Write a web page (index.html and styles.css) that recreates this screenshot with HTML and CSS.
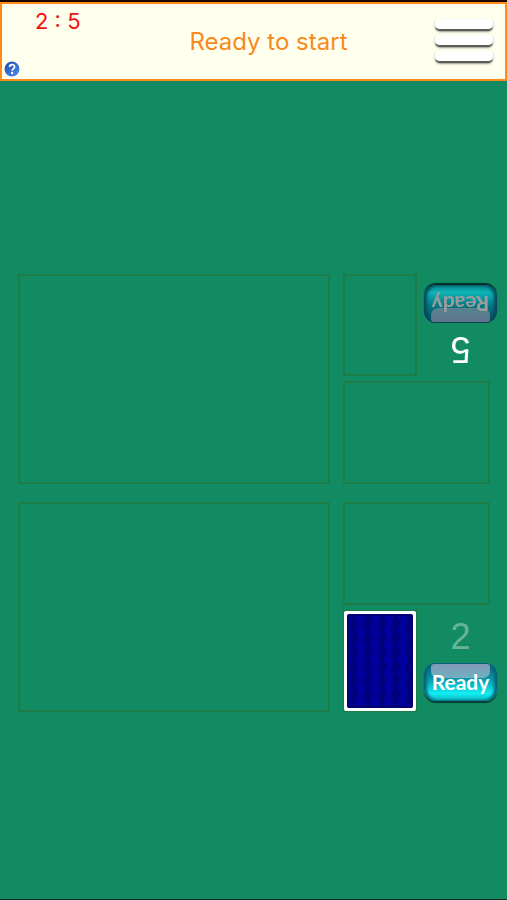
FILE: index.html
```
<!DOCTYPE html>
<html lang="en">
<head>
    <meta charset="UTF-8">
    <meta name="viewport" content="width=device-width, initial-scale=1.0">
    <title>Card Game</title>
    <link rel="stylesheet" href="styles.css">
</head>
<body>
    <header class="top-bar">
        <div class="score-box">
            <span class="score">2 : 5</span>
            <button type="button" class="help-button" aria-label="Help">
                <svg width="16" height="16" viewBox="0 0 16 16">
                    <defs>
                        <linearGradient id="helpFill" x1="0" y1="0" x2="1" y2="1">
                            <stop offset="0" stop-color="#1848ac"/>
                            <stop offset="1" stop-color="#5092ee"/>
                        </linearGradient>
                    </defs>
                    <circle cx="8" cy="8" r="7.5" fill="url(#helpFill)"/>
                    <path d="M5.6 6 C5.6 2.8 10.6 2.8 10.6 5.8 C10.6 7.6 8.2 7.6 8.2 9.8" fill="none" stroke="#fff" stroke-width="1.8"/>
                    <circle cx="8.1" cy="12" r="1.2" fill="#fff"/>
                </svg>
            </button>
        </div>
        <h1 class="status">Ready to start</h1>
        <button type="button" class="menu-button" aria-label="Menu">
            <span class="menu-bar"></span>
            <span class="menu-bar"></span>
            <span class="menu-bar"></span>
        </button>
    </header>

    <main class="table">
        <!-- Opponent -->
        <section class="player">
            <div class="slot meld"></div>
            <div class="side">
                <div class="side-row">
                    <div class="slot pile"></div>
                    <div class="controls flipped">
                        <span class="count">5</span>
                        <button type="button" class="ready-button" disabled>Ready</button>
                    </div>
                </div>
                <div class="slot discard"></div>
            </div>
        </section>

        <!-- Player -->
        <section class="player">
            <div class="slot meld"></div>
            <div class="side">
                <div class="slot discard"></div>
                <div class="side-row">
                    <div class="slot pile has-card">
                        <svg class="card" viewBox="0 0 66 93" preserveAspectRatio="none">
                            <defs>
                                <pattern id="cardBack" width="14" height="14" patternUnits="userSpaceOnUse">
                                    <rect width="14" height="14" fill="#00009c"/>
                                    <path d="M2 0 L6 4 L3 8 L2 14 H8 L11 9 L7 4 L8 0 Z" fill="#000080"/>
                                    <path d="M8 0 L7 4 L11 9 L8 14" fill="none" stroke="#000068" stroke-width="1"/>
                                </pattern>
                            </defs>
                            <rect width="66" height="93" rx="2" fill="url(#cardBack)"/>
                            <rect x="1" y="1" width="64" height="91" rx="2" fill="none" stroke="#000070" stroke-width="2"/>
                        </svg>
                    </div>
                    <div class="controls">
                        <span class="count waiting">2</span>
                        <button type="button" class="ready-button">Ready</button>
                    </div>
                </div>
            </div>
        </section>
    </main>
</body>
</html>
```

FILE: styles.css
```
* {
    box-sizing: border-box;
}
body {
    margin: 0;
    min-height: 100vh;
    display: flex;
    flex-direction: column;
    font-family: Inter, "Liberation Sans", sans-serif;
    background-color: #128b63;
    border-top: 2px solid #1a0800;
    border-bottom: 1px solid #06301f;
}
button {
    border: none;
    padding: 0;
    background: none;
    cursor: pointer;
}
.top-bar {
    display: grid;
    grid-template-columns: 100px 1fr 60px;
    height: 79px;
    padding-right: 10px;
    background-color: #ffffee;
    border: 2px solid #ff8c1a;
}
.score-box {
    display: flex;
    flex-direction: column;
    justify-content: space-between;
    padding: 3px 0 2px 2px;
}
.score {
    padding-left: 31px;
    font-size: 22px;
    line-height: 28px;
    color: #f01010;
    white-space: nowrap;
}
.help-button {
    width: 16px;
    height: 16px;
}
.help-button svg {
    display: block;
}
.status {
    margin: 0;
    align-self: center;
    text-align: center;
    font-size: 24px;
    font-weight: 400;
    line-height: 32px;
    color: #f78a1c;
}
.menu-button {
    display: flex;
    flex-direction: column;
    gap: 4px;
    padding-top: 15px;
}
.menu-bar {
    width: 58px;
    height: 12px;
    border-bottom: 2px solid #5c5c58;
    border-radius: 3px 3px 5px 5px;
    background-color: #ffffff;
    box-shadow: 0 1px 2px #99998e;
}
.table {
    flex: 1;
    display: flex;
    flex-direction: column;
    justify-content: center;
    gap: 18px;
    padding: 6px 10px 0 18px;
}
.player {
    display: grid;
    grid-template-columns: 1fr 154px;
    gap: 13px;
    height: 210px;
}
.slot {
    border: 2px solid #1c7d46;
}
.side {
    display: flex;
    flex-direction: column;
    gap: 5px;
}
.side-row {
    flex: 1;
    display: flex;
    gap: 7px;
}
.discard {
    height: 103px;
    margin-right: 7px;
}
.pile {
    width: 74px;
}
.has-card {
    border-width: 1px;
}
.card {
    display: block;
    width: 100%;
    height: 100%;
    padding: 3px;
    background-color: #ffffff;
    border-radius: 2px;
}
.controls {
    flex: 1;
    display: flex;
    flex-direction: column;
    align-items: center;
    justify-content: flex-end;
    gap: 6px;
    padding-bottom: 11px;
}
.flipped {
    transform: rotate(180deg);
}
.count {
    font-family: "Liberation Sans", sans-serif;
    font-size: 36px;
    line-height: 40px;
    color: #ffffff;
}
.waiting {
    color: #67b497;
}
.ready-button {
    position: relative;
    width: 100%;
    height: 38px;
    border-radius: 12px;
    background: linear-gradient(#075a78, #079fae 45%, #12eef2 80%, #08b4bd);
    box-shadow: inset 3px 0 3px #08637b, inset -3px 0 3px #08637b, 0 2px 1px #083d35;
    font-family: Lato, sans-serif;
    font-size: 21px;
    font-weight: 700;
    line-height: 34px;
    color: #ffffff;
    isolation: isolate;
}
/* glossy highlight behind the label */
.ready-button::before {
    content: "";
    position: absolute;
    inset: 1px 7px auto;
    height: 14px;
    border-radius: 3px 3px 7px 7px;
    background: linear-gradient(#8299b8, #70b0bf);
    z-index: -1;
}
.ready-button:disabled {
    color: #d0d0d0;
    filter: brightness(0.75);
    cursor: default;
}
```
